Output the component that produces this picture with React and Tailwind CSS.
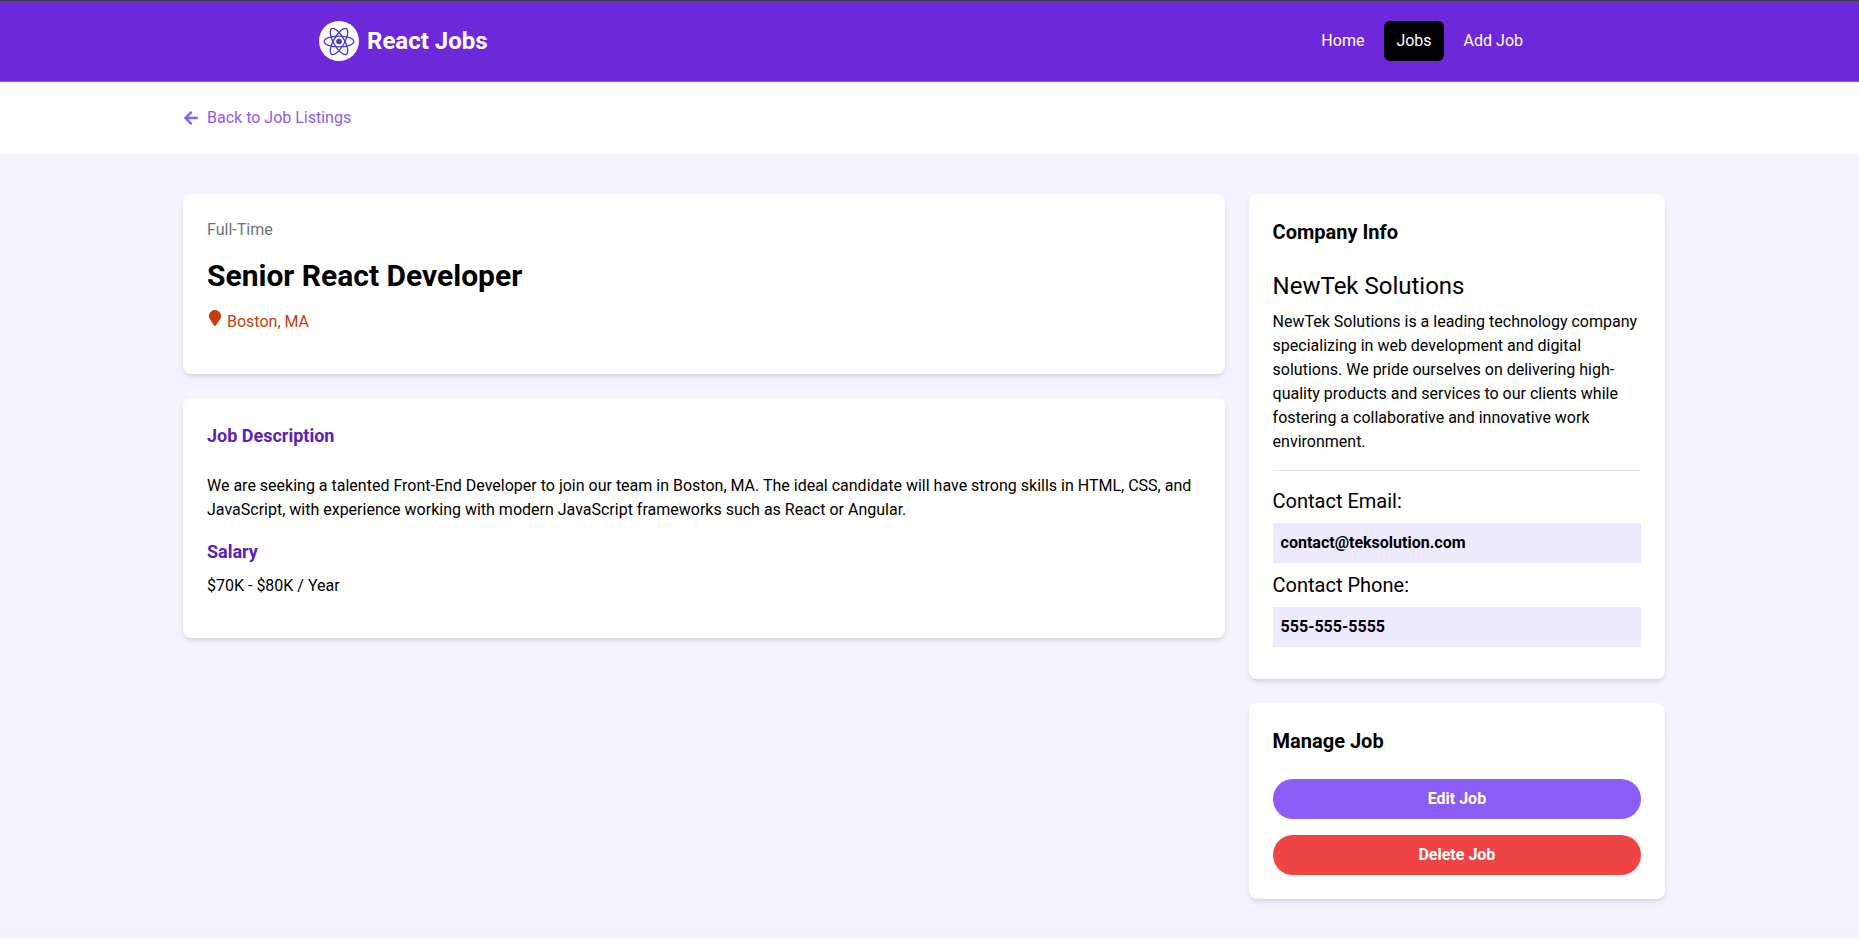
import { FaArrowLeft, FaMapMarker } from 'react-icons/fa';

const linkBase = 'rounded-md px-3 py-2 text-white';

function Logo() {
  return (
    <svg className="mr-2 h-10 w-10" viewBox="0 0 40 40" aria-hidden="true">
      <circle cx="20" cy="20" r="20" fill="#fff" />
      <g fill="none" stroke="#4338ca" strokeWidth="1.3">
        <ellipse cx="20" cy="20.5" rx="14.8" ry="5.4" />
        <ellipse cx="20" cy="20.5" rx="14.8" ry="5.4" transform="rotate(60 20 20.5)" />
        <ellipse cx="20" cy="20.5" rx="14.8" ry="5.4" transform="rotate(120 20 20.5)" />
      </g>
      <circle cx="20" cy="20.5" r="2.8" fill="#4338ca" />
    </svg>
  );
}

function Navbar() {
  return (
    <nav className="border-t border-b border-t-[#3b3b3b] border-b-[#8b5cf6] bg-[#6d28d9] pr-[5px]">
      <div className="mx-auto flex h-20 max-w-7xl items-center justify-between px-8">
        <a href="#home" className="flex items-center">
          <Logo />
          <span className="text-2xl font-bold text-white">React Jobs</span>
        </a>
        <div className="flex gap-2">
          <a href="#home" className={linkBase}>Home</a>
          <a href="#jobs" className={`${linkBase} bg-black`} aria-current="page">Jobs</a>
          <a href="#add" className={linkBase}>Add Job</a>
        </div>
      </div>
    </nav>
  );
}

function Card({ children }) {
  return <div className="rounded-lg bg-white p-6 shadow-md">{children}</div>;
}

export default function App() {
  return (
    <div className="bg-white font-['Roboto',sans-serif] text-base text-black">
      <Navbar />
      <section className="pr-[5px]">
        <div className="mx-auto max-w-[1536px] px-6 py-6">
          <a href="#jobs" className="flex items-center text-[#8b5cf6]">
            <FaArrowLeft className="mr-2" /> Back to Job Listings
          </a>
        </div>
      </section>
      <section className="bg-[#f5f3ff] pr-[5px]">
        <div className="mx-auto max-w-[1536px] px-6 py-10">
          <div className="grid w-full grid-cols-[70%_28%] gap-6">
            <main className="flex flex-col gap-6">
              <Card>
                <div className="mb-4 text-[#6b7280]">Full-Time</div>
                <h1 className="mb-4 text-3xl font-bold">Senior React Developer</h1>
                <div className="mb-4 flex text-[#c2410c]">
                  <FaMapMarker className="mr-1" />
                  <p>Boston, MA</p>
                </div>
              </Card>
              <Card>
                <h3 className="mb-6 text-lg font-bold text-[#5b21b6]">Job Description</h3>
                <p className="mb-4">
                  We are seeking a talented Front-End Developer to join our team in Boston, MA. The ideal
                  candidate will have strong skills in HTML, CSS, and JavaScript, with experience working
                  with modern JavaScript frameworks such as React or Angular.
                </p>
                <h3 className="mb-2 text-lg font-bold text-[#5b21b6]">Salary</h3>
                <p className="mb-4">$70K - $80K / Year</p>
              </Card>
            </main>
            <aside className="flex flex-col gap-6">
              <Card>
                <h3 className="mb-6 text-xl font-bold">Company Info</h3>
                <h2 className="text-2xl">NewTek Solutions</h2>
                <p className="my-2">
                  NewTek Solutions is a leading technology company specializing in web development and
                  digital solutions. We pride ourselves on delivering high-quality products and services
                  to our clients while fostering a collaborative and innovative work environment.
                </p>
                <hr className="my-4 border-[#e5e7eb]" />
                <h3 className="text-xl">Contact Email:</h3>
                <p className="my-2 bg-[#ede9fe] p-2 font-bold">contact@teksolution.com</p>
                <h3 className="text-xl">Contact Phone:</h3>
                <p className="my-2 bg-[#ede9fe] p-2 font-bold">555-555-5555</p>
              </Card>
              <Card>
                <h3 className="mb-6 text-xl font-bold">Manage Job</h3>
                <div className="flex flex-col gap-4">
                  <a href="#edit" className="rounded-full bg-[#8b5cf6] px-4 py-2 text-center font-bold text-white">
                    Edit Job
                  </a>
                  <button type="button" className="rounded-full bg-[#ef4444] px-4 py-2 font-bold text-white">
                    Delete Job
                  </button>
                </div>
              </Card>
            </aside>
          </div>
        </div>
      </section>
    </div>
  );
}
